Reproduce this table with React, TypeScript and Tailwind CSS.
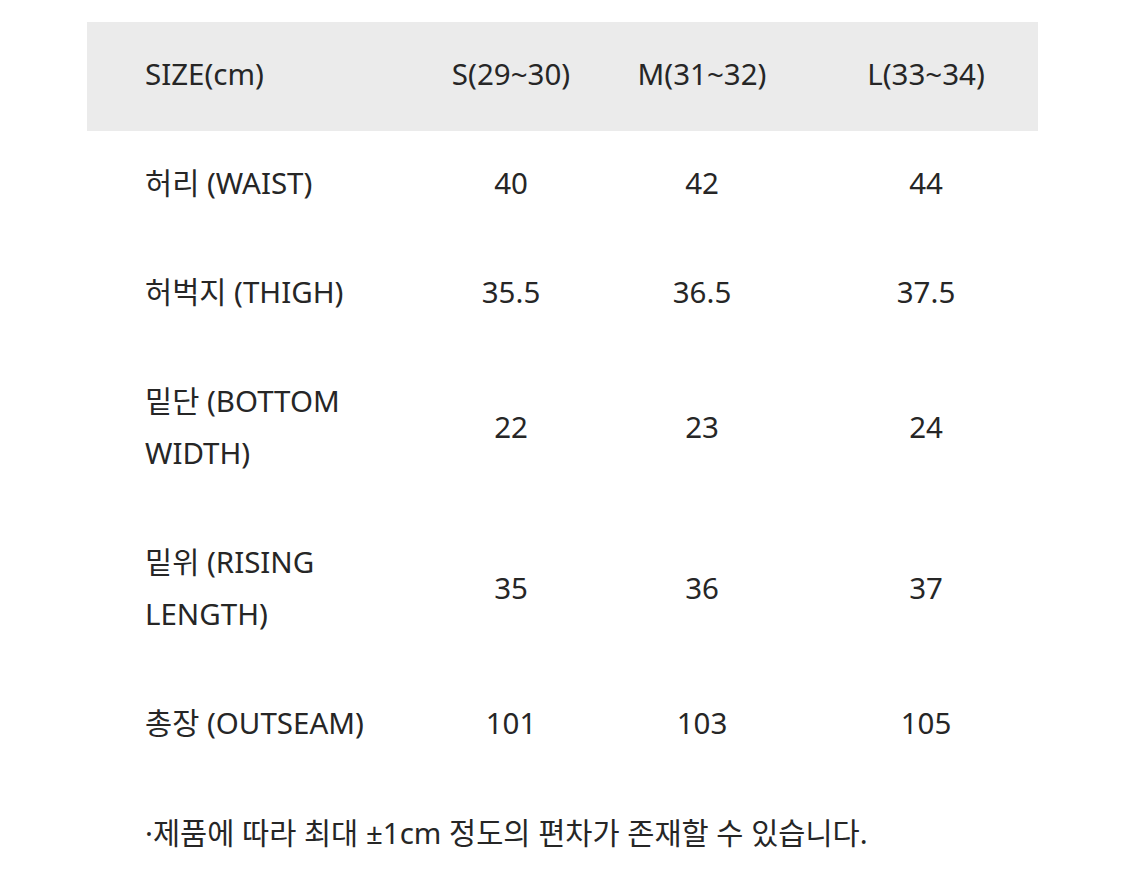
import React from 'react';

const rows: { label: string; values: string[] }[] = [
  { label: '허리 (WAIST)', values: ['40', '42', '44'] },
  { label: '허벅지 (THIGH)', values: ['35.5', '36.5', '37.5'] },
  { label: '밑단 (BOTTOM WIDTH)', values: ['22', '23', '24'] },
  { label: '밑위 (RISING LENGTH)', values: ['35', '36', '37'] },
  { label: '총장 (OUTSEAM)', values: ['101', '103', '105'] },
];

const sizes = ['S(29~30)', 'M(31~32)', 'L(33~34)'];

function Row({ label, values, head }: { label: string; values: string[]; head?: boolean }) {
  return (
    <div className={`grid grid-cols-[333px_182px_200px_236px] items-center ${head ? 'bg-[#ebebeb]' : ''}`}>
      <div className="pl-[58px] pr-[15px] pt-[26px] pb-[31px]">{label}</div>
      {values.map((v, i) => (
        <div key={i} className={`text-center pt-[26px] pb-[31px] ${i === 2 ? 'pl-[12px]' : ''}`}>
          {v}
        </div>
      ))}
    </div>
  );
}

export default function App() {
  return (
    <div
      className="min-h-screen bg-white pt-[22px] text-[#262626] text-[29.5px] leading-[52px]"
      style={{ fontFamily: '"Noto Sans", "Noto Sans CJK KR", sans-serif' }}
    >
      <div className="ml-[87px] w-[951px]">
        <Row head label="SIZE(cm)" values={sizes} />
        {rows.map(r => (
          <Row key={r.label} label={r.label} values={r.values} />
        ))}
        <p className="pl-[58px] mt-[27px]">·제품에 따라 최대 ±1cm 정도의 편차가 존재할 수 있습니다.</p>
      </div>
    </div>
  );
}
